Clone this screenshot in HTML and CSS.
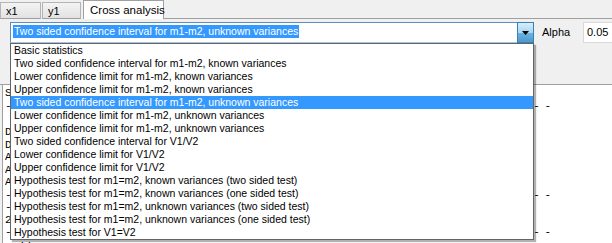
FILE: index.html
```html
<!DOCTYPE html>
<html>
<head>
<meta charset="utf-8">
<link rel="stylesheet" href="styles.css">
</head>
<body>
<div class="window">
  <div class="tabs">
    <div class="tab">x1</div>
    <div class="tab tab-y">y1</div>
    <div class="tab active">Cross analysis</div>
    <div class="tab-fill"></div>
  </div>
  <div class="toolbar">
    <div class="combo">
      <div class="combo-text"><span class="sel">Two sided confidence interval for m1-m2, unknown variances</span></div>
      <div class="combo-btn"><svg width="7" height="4" viewBox="0 0 7 4"><path d="M0 0H7L3.5 4Z" fill="#000"/></svg></div>
    </div>
    <div class="alpha-label">Alpha</div>
    <div class="alpha-input">0.05</div>
  </div>
  <div class="results">
    <div class="rrow"><span class="rlabel">S</span></div>
    <div class="rrow"><span class="rlabel">-</span><span class="rdash">- - -</span></div>
    <div class="rrow first"><span class="rlabel">D</span></div>
    <div class="rrow"><span class="rlabel">D</span></div>
    <div class="rrow"><span class="rlabel">A</span></div>
    <div class="rrow"><span class="rlabel">A</span></div>
    <div class="rrow"><span class="rlabel">A</span></div>
    <div class="rrow"><span class="rlabel">-</span><span class="rdash">- - -</span></div>
    <div class="rrow"><span class="rlabel">-</span></div>
    <div class="rrow"><span class="rlabel">2</span></div>
    <div class="rrow"><span class="rlabel">-</span><span class="rdash">- - -</span></div>
    <div class="rrow last"><span class="rvalues">'(0.005&nbsp;&nbsp;&nbsp;021&nbsp;&nbsp;&nbsp;0.0700</span></div>
  </div>
  <ul class="dropdown">
    <li>Basic statistics</li>
    <li>Two sided confidence interval for m1-m2, known variances</li>
    <li>Lower confidence limit for m1-m2, known variances</li>
    <li>Upper confidence limit for m1-m2, known variances</li>
    <li class="hl">Two sided confidence interval for m1-m2, unknown variances</li>
    <li>Lower confidence limit for m1-m2, unknown variances</li>
    <li>Upper confidence limit for m1-m2, unknown variances</li>
    <li>Two sided confidence interval for V1/V2</li>
    <li>Lower confidence limit for V1/V2</li>
    <li>Upper confidence limit for V1/V2</li>
    <li>Hypothesis test for m1=m2, known variances (two sided test)</li>
    <li>Hypothesis test for m1=m2, known variances (one sided test)</li>
    <li>Hypothesis test for m1=m2, unknown variances (two sided test)</li>
    <li>Hypothesis test for m1=m2, unknown variances (one sided test)</li>
    <li>Hypothesis test for V1=V2</li>
  </ul>
</div>
</body>
</html>
```
FILE: styles.css
```css
* { box-sizing: border-box; }
html, body {
  margin: 0;
  padding: 0;
  background: #f0f0f0;
  font-family: "Liberation Sans", Arial, sans-serif;
  font-size: 10.5px;
  color: #000;
  overflow: hidden;
}
.window {
  position: relative;
  width: 612px;
  height: 243px;
  overflow: hidden;
}
.tabs {
  display: flex;
  height: 19px;
  align-items: flex-end;
}
.tab {
  flex-shrink: 0;
  height: 17px;
  padding: 2px 0 0 5px;
  width: 41px;
  margin-right: 1px;
  border: 1px solid #b4b4b4;
  border-bottom: 1px solid #a0a0a0;
  background: linear-gradient(#f4f4f4, #e2e2e2);
  line-height: 13px;
  font-size: 11px;
  white-space: nowrap;
}
.tab-y { width: 39px; margin-right: 2px; }
.tab.active {
  height: 19px;
  width: 81px;
  padding: 3px 0 0 6px;
  background: #fff;
  border: 1px solid #a0a0a0;
  border-bottom: none;
  margin-right: 0;
  font-size: 11.5px;
}
.tab-fill {
  flex: 1;
  height: 1px;
  background: #a0a0a0;
}
.toolbar {
  display: flex;
  height: 66px;
  padding: 3px 0 0 10px;
  align-items: flex-start;
  border-bottom: 1px solid #a0a0a0;
  overflow: hidden;
}
.combo {
  flex-shrink: 0;
  display: flex;
  width: 524px;
  height: 21px;
  border: 1px solid #5c8ec2;
  border-bottom-color: #a6c3e0;
  background: #fff;
}
.combo-text {
  flex: 1;
  padding: 2px 0 0 2px;
}
.sel {
  display: inline-block;
  background: #3399ff;
  color: #fff;
  height: 13px;
  line-height: 13px;
  padding: 0 1px;
}
.combo-btn {
  width: 17px;
  margin: -1px -1px -1px 0;
  border: 1px solid #3c7fb1;
  background: linear-gradient(#d6eefb, #a8d7f3 50%, #6fb3e0 51%, #4b9ad0);
  display: flex;
  align-items: center;
  justify-content: center;
}
.alpha-label {
  flex-shrink: 0;
  margin: 4px 0 0 8px;
  width: 41px;
  font-size: 11px;
}
.alpha-input {
  flex-shrink: 0;
  height: 21px;
  width: 40px;
  background: #fff;
  border: 1px solid #d9d9d9;
  padding: 3px 0 0 3px;
  font-size: 11px;
}
.results {
  background: #fff;
  border-left: 1px solid #a0a0a0;
  margin-left: 2px;
  height: 158px;
  padding: 2px 62px 0 2px;
  font-family: "Liberation Mono", monospace;
  font-size: 11px;
}
.rrow {
  display: flex;
  height: 12.5px;
  line-height: 12.5px;
  white-space: nowrap;
}
.rrow.first { margin-top: 14px; }
.rrow.last { padding-left: 14px; margin-top: 2px; }
.rlabel { width: 8px; overflow: hidden; }
.rdash { margin-left: auto; letter-spacing: -1px; }
.dropdown {
  position: absolute;
  left: 10px;
  top: 43px;
  width: 524px;
  height: 197px;
  margin: 0;
  padding: 0;
  list-style: none;
  background: #fff;
  border: 1px solid #646464;
  box-shadow: 2px 2px 1px rgba(0, 0, 0, 0.3);
}
.dropdown li {
  height: 13px;
  line-height: 13px;
  padding-left: 3px;
  white-space: nowrap;
}
.dropdown li.hl {
  background: #3399ff;
  color: #fff;
}
```
